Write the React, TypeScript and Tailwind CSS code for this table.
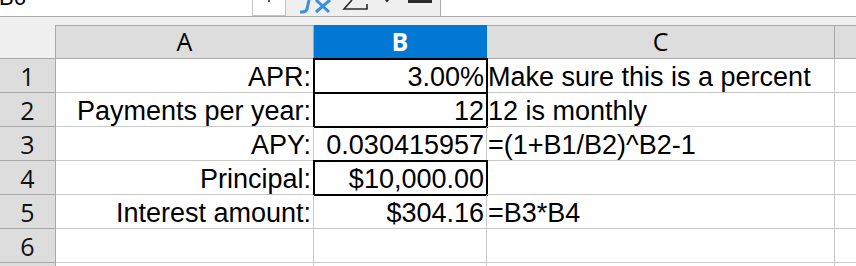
import React from "react";

type Row = {
    label: string;
    value: string;
    note: string;
    boxed?: boolean;
};

const rows: Row[] = [
    {label: "APR:", value: "3.00%", note: "Make sure this is a percent", boxed: true},
    {label: "Payments per year:", value: "12", note: "12 is monthly", boxed: true},
    {label: "APY:", value: "0.030415957", note: "=(1+B1/B2)^B2-1"},
    {label: "Principal:", value: "$10,000.00", note: "", boxed: true},
    {label: "Interest amount:", value: "$304.16", note: "=B3*B4"},
    {label: "", value: "", note: ""},
    {label: "", value: "", note: ""},
];

const cell = "h-[34px] border-r border-b border-[#c8c8c8] flex items-end leading-[30px] whitespace-nowrap overflow-visible";
const header = "h-[34px] border-t border-r border-b border-[#a9a9a9] bg-[#dddddd] flex items-end justify-center leading-[33px] font-['Open_Sans',sans-serif] text-[25px]";

function FormulaBar() {
    return (
        <div className="flex h-[17px] border-b border-[#a9a9a9] bg-[#efefef]">
            <div className="w-[252px] bg-white overflow-hidden">
                <div className="-mt-[13px] -ml-[1px] text-[22px] leading-none text-black">B6</div>
            </div>
            <div className="w-[34px] h-[16px] bg-white border-l border-r border-b border-[#c4c4c4] flex justify-center">
                <div className="w-[2px] h-[2px] bg-[#555]"></div>
            </div>
            {/* toolbar icons, only their lower part is on screen */}
            <div className="w-[154px] h-[16px]">
                <svg width="154" height="16" viewBox="0 0 154 16">
                    <path d="M23 0 L21 9 Q20 12 16.5 12 L14 12" stroke="#3c8fdc" strokeWidth="3" fill="none" />
                    <path d="M30 0 L43 12 M44 0 L30 12" stroke="#3c8fdc" strokeWidth="3" fill="none" />
                    <path d="M66 0 L58 9 L81 9 L81 4" stroke="#2b2b2b" strokeWidth="1.6" fill="none" />
                    <polygon points="99,0 103,0 101,2.5" fill="#222" />
                    <rect x="122" y="0" width="24" height="3" fill="#2b2b2b" />
                </svg>
            </div>
            <div className="flex-1 h-[16px] bg-white border-l border-[#a9a9a9]"></div>
        </div>
    );
}

export default function App() {
    return (
        <div className="w-[856px] h-[266px] overflow-hidden bg-white text-black font-['Liberation_Sans',Arial,sans-serif]">
            <FormulaBar />
            <div className="h-[8px] bg-[#efefef]"></div>
            <div className="grid grid-cols-[56px_258px_173px_348px_1fr]">
                <div className="h-[34px] border-r border-b border-[#a9a9a9] bg-[#efefef]"></div>
                <div className={header}>A</div>
                <div className="h-[34px] border-t border-r border-b border-[#0078d4] bg-[#0078d4] text-white font-bold flex items-end justify-center leading-[33px] font-['Open_Sans',sans-serif] text-[25px]">B</div>
                <div className={header}>C</div>
                <div className="h-[34px] border-t border-b border-[#a9a9a9] bg-[#dddddd]"></div>

                {rows.map((row, i) => (
                    <React.Fragment key={i}>
                        <div className="h-[34px] border-r border-b border-[#a9a9a9] bg-[#dddddd] flex items-end justify-center leading-[32px] font-['Open_Sans',sans-serif] text-[25px] text-[#111]">
                            {i < 6 ? i + 1 : ""}
                        </div>
                        <div className={`${cell} justify-end pr-[2px] text-[27px]`}>{row.label}</div>
                        <div className={`${cell} justify-end pr-[2px] text-[27px] ${row.boxed ? "outline-2 outline-black -outline-offset-1" : ""}`}>
                            {row.value}
                        </div>
                        <div className={`${cell} pl-[1px] text-[27px]`}>{row.note}</div>
                        <div className="h-[34px] border-b border-[#c8c8c8]"></div>
                    </React.Fragment>
                ))}
            </div>
        </div>
    );
}
